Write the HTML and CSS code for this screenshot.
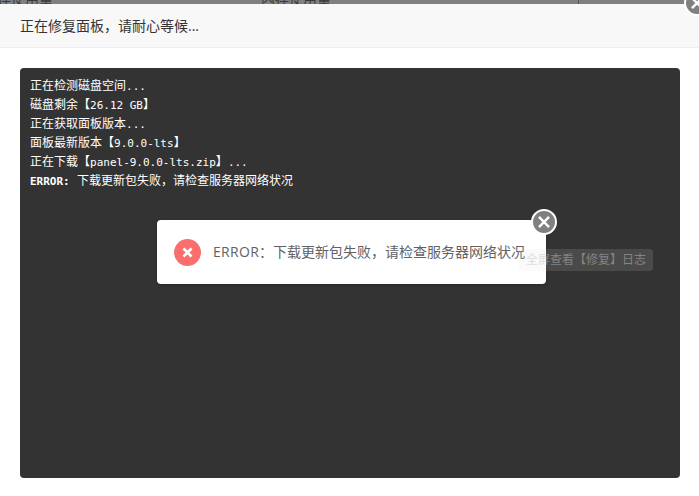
FILE: index.html
```html
<!DOCTYPE html>
<html lang="zh">
<head>
<meta charset="utf-8">
<title>修复面板</title>
<link rel="stylesheet" href="styles.css">
</head>
<body>
<div class="backdrop">
  <span class="under under-left">内存使用量</span>
  <span class="under under-mid">内存使用量</span>
  <span class="under-tick"></span>
</div>
<div class="layer">
  <div class="layer-title">正在修复面板，请耐心等候...</div>
  <div class="layer-body">
    <pre class="console">正在检测磁盘空间<b>...</b>
磁盘剩余【<b>26.12 GB</b>】
正在获取面板版本<b>...</b>
面板最新版本【<b>9.0.0-lts</b>】
正在下载【<b>panel-9.0.0-lts.zip</b>】<b>...</b>
<b class="err">ERROR:</b> 下载更新包失败，请检查服务器网络状况</pre>
  </div>
  <button class="close close-layer" aria-label="关闭"><svg viewBox="0 0 24 24" class="close-x"><path d="M6.5 6.5l11 11M17.5 6.5l-11 11"/></svg></button>
</div>
<div class="msg">
  <span class="msg-icon"><svg viewBox="0 0 27 27"><path d="M9.5 9.5l8 8M17.5 9.5l-8 8"/></svg></span>
  <span class="msg-text"><span class="msg-code">ERROR</span>：下载更新包失败，请检查服务器网络状况</span>
  <button class="close close-msg" aria-label="关闭"><svg viewBox="0 0 24 24" class="close-x"><path d="M6.5 6.5l11 11M17.5 6.5l-11 11"/></svg></button>
</div>
<div class="tip">全屏查看【修复】日志</div>
</body>
</html>
```
FILE: styles.css
```css
* { box-sizing: border-box; }
html, body { margin: 0; height: 100%; }
body {
  width: 699px;
  height: 496px;
  overflow: hidden;
  position: relative;
  background: #808080;
  font-family: "Open Sans", "Noto Sans", "Noto Sans CJK SC", sans-serif;
}
.backdrop { height: 4px; position: relative; overflow: hidden; }
.under { position: absolute; top: -11px; font-size: 14px; line-height: 20px; color: #3a3a3a; white-space: nowrap; }
.under-left { left: -17px; }
.under-mid { left: 261px; }
.under-tick { position: absolute; left: 578px; top: 0; width: 1px; height: 4px; background: #555; }
.layer {
  position: absolute;
  left: 0; top: 4px;
  width: 699px;
  height: 492px;
  background: #fff;
  border-radius: 2px 0 0 0;
  display: flex;
  flex-direction: column;
}
.layer-title {
  height: 44px;
  flex: none;
  padding-left: 20px;
  line-height: 43px;
  font-size: 14px;
  color: #333;
  background: #f8f8f8;
  border-bottom: 1px solid #eee;
}
.layer-body { flex: 1; padding: 20px 19px 18px 20px; }
.console {
  margin: 0;
  height: 100%;
  padding: 9px 10px;
  background: #333;
  border-radius: 4px;
  color: #fff;
  font-family: "DejaVu Sans Mono", "Noto Sans CJK SC", monospace;
  font-size: 12px;
  line-height: 18px;
  white-space: pre-wrap;
}
.console b { font-size: 11px; font-weight: 400; }
.console .err { font-weight: 700; }
.close {
  position: absolute;
  padding: 0;
  width: 26px;
  height: 26px;
  border-radius: 50%;
  border: 2px solid #fff;
  background: #808080;
  display: flex;
  align-items: center;
  justify-content: center;
}
.close-layer { right: -11px; top: -14px; }
.close-x { width: 22px; height: 22px; }
.close-x path { fill: none; stroke: #fff; stroke-width: 2.6; }
.tip {
  position: absolute;
  left: 519px;
  top: 249px;
  height: 22px;
  padding: 0 7px;
  line-height: 22px;
  font-size: 12px;
  color: rgba(190,190,190,.5);
  background: rgba(221,221,221,.14);
  border-radius: 3px;
  white-space: nowrap;
}
.msg {
  position: absolute;
  left: 157px;
  top: 220px;
  width: 389px;
  height: 64px;
  background: #fff;
  border-radius: 4px;
  box-shadow: 0 1px 3px rgba(0,0,0,.25);
  display: flex;
  align-items: center;
  padding-left: 17px;
}
.msg-icon { width: 27px; height: 27px; flex: none; border-radius: 50%; background: #fb6e6e; margin-right: 12px; }
.msg-icon svg { display: block; width: 27px; height: 27px; }
.msg-icon path { fill: none; stroke: #fff; stroke-width: 2.6; }
.msg-text { font-size: 14px; color: #606266; white-space: nowrap; padding-bottom: 2px; }
.msg-code { letter-spacing: .3px; }
.close-msg { right: -11px; top: -11px; }
```
